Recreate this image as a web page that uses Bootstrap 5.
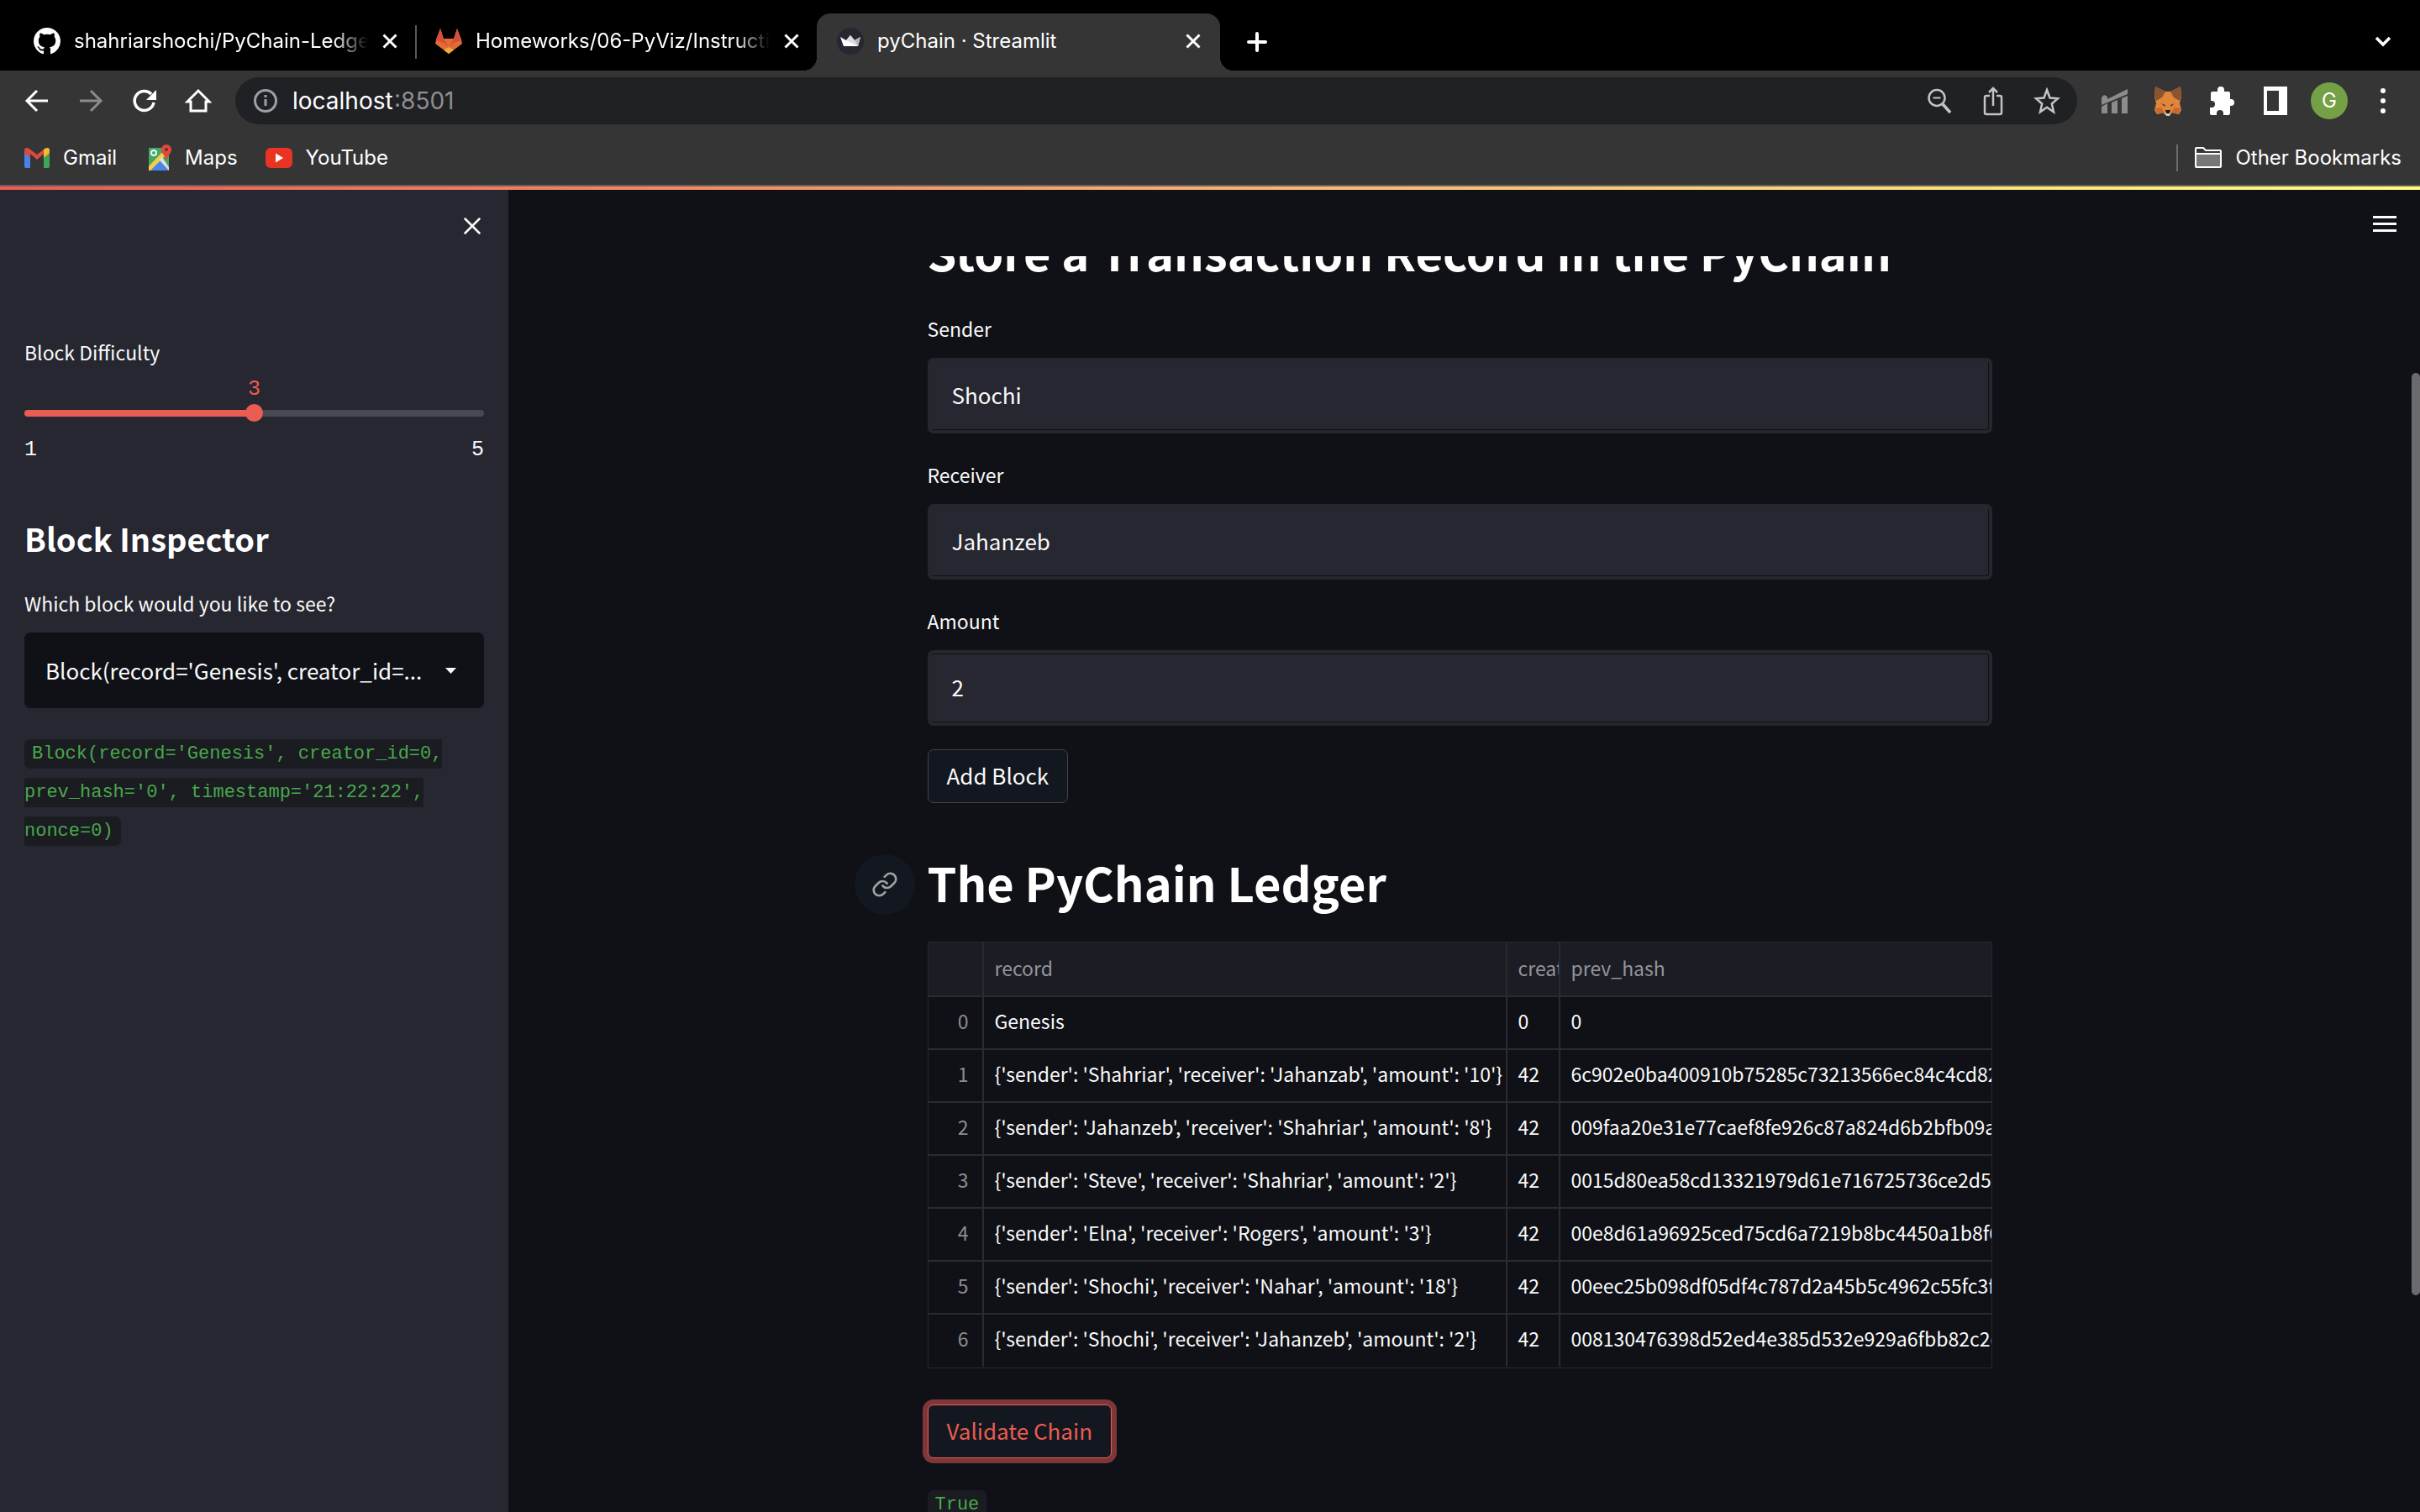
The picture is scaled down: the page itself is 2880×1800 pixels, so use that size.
<!DOCTYPE html>
<html lang="en" data-bs-theme="dark">
<head>
<meta charset="utf-8">
<meta name="viewport" content="width=device-width, initial-scale=1">
<title>pyChain · Streamlit</title>
<link rel="stylesheet" href="https://cdn.jsdelivr.net/npm/bootstrap@5.3.0/dist/css/bootstrap.min.css">
<style>
:root{--ink:#fafafa;--page:#0f1116;--panel:#262730;--accent:#eb5c53;--chrome:#353535;--ui:Inter,"Liberation Sans",sans-serif;--text:"Noto Sans CJK SC","Noto Sans",sans-serif;--code:"Liberation Mono",monospace}
body{background:var(--page);color:var(--ink);font-family:var(--text);font-size:23px;line-height:36px}
svg{display:block;flex:none}
.plain{background:none;border:0;padding:0;color:inherit}
/* browser frame */
.browser{font-family:var(--ui);font-size:24px;line-height:32px;color:#fff}
.tabstrip{background:#000;height:84px;padding:16px 34px 0 40px}
.tab-item{width:434px;margin-right:20px;padding-bottom:2px}
.tab-item .name{overflow:hidden;white-space:nowrap;-webkit-mask-image:linear-gradient(to right,#000 88%,transparent)}
.tab-rule{width:2px;height:40px;background:#5a5a5a;margin-right:22px}
.tab-live{width:480px;background:var(--chrome);border-radius:16px 16px 0 0;position:relative;padding:0 22px 2px 24px;margin-right:32px}
.tab-live::before,.tab-live::after{content:"";position:absolute;bottom:0;width:16px;height:16px}
.tab-live::before{left:-16px;background:radial-gradient(circle at 0 0,transparent 16px,var(--chrome) 16px)}
.tab-live::after{right:-16px;background:radial-gradient(circle at 100% 0,transparent 16px,var(--chrome) 16px)}
.toolbar{background:var(--chrome);height:72px;padding:0 28px}
.icon-row{display:flex;align-items:center;gap:32px}
.omni{background:#202124;border-radius:28px;height:56px;padding:0 20px}
.omni input{background:none;border:0;color:#fff;font-size:28px;width:121px;padding:0;outline:0}
.port{font-size:28px;color:#8f8f8f}
.avatar{width:44px;height:44px;margin:0 -6px;border-radius:50%;background:#74a046;font-size:24px}
.bookmarks{background:var(--chrome);height:66px;padding:0 22px 0 29px;border-bottom:2px solid #616161}
.bookmarks a{color:#fff;text-decoration:none;margin-right:33px}
.bookmarks a:last-child{margin-right:0}
.rainbow{height:4px;background:linear-gradient(to right,#ee5a52,#f9b873 55%,#fffd80)}
/* sidebar */
.side{width:605px;background:var(--panel);padding:0 29px}
.side-head{height:175px;padding:33px 4px 0 0}
.tick{font-family:var(--code);font-size:25px;line-height:30px;padding-top:8px}
.tick-now{color:var(--accent)}
.slide{appearance:none;width:100%;height:22px;background:none;display:block;margin:2px 0 10px}
.slide::-webkit-slider-runnable-track{height:8px;border-radius:4px;background:linear-gradient(to right,var(--accent) 50%,#484953 50%)}
.slide::-webkit-slider-thumb{appearance:none;width:21px;height:21px;border-radius:50%;background:var(--accent);margin-top:-7px}
.side h2{font-size:38px;line-height:52px;font-weight:700;margin:64px 0 33px}
.picker{appearance:none;width:100%;height:90px;border:0;border-radius:7px;background:var(--page);color:var(--ink);font-size:26px;padding:0 70px 0 25px}
.pick-arrow{position:absolute;right:33px;top:42px;pointer-events:none}
.chip{font-family:var(--code);font-size:22px;line-height:46px;color:#49a84a;background:#1a1c22;border-radius:7px;padding:5px 9px;word-wrap:normal}
/* main */
.main-head{height:79px;padding:31px 28px 0}
.column{width:1267px;margin-top:-45px}
.column h1{font-size:56px;line-height:78px;font-weight:700;margin:0}
.column form{margin:35px 0 55px}
.fieldrow{margin-bottom:31px}
.fieldrow label,.side label{display:block;margin-bottom:17px;line-height:36px}
.fieldrow input{display:block;width:100%;height:90px;border:4px solid #25272d;border-radius:7px;background:var(--panel);box-shadow:inset -1px -1px 0 var(--page);color:var(--ink);font-size:26px;padding:0 25px 3px;outline:0}
.fieldrow:last-of-type input{box-shadow:inset -1px -1px 0 var(--page),inset 0 1px 0 var(--page)}
.act{height:64px;padding:0 22px 2px;border:1px solid #41444c;border-radius:7px;background:#131720;color:var(--ink);font-size:26px;line-height:36px}
.act-on{border-color:var(--accent);color:var(--accent);box-shadow:0 0 0 6px #7f3639}
.anchor{position:absolute;left:-87px;top:6px;width:72px;height:72px;border-radius:50%;background:#131720}
.ledger{border:1px solid #26282e;margin:32px 0 43px;overflow:hidden}
.ledger table{table-layout:fixed;width:100%;border-collapse:separate;border-spacing:0}
.ledger th,.ledger td{height:63px;padding:0 13px 5px;border-right:2px solid #292b31;border-bottom:2px solid #292b31;overflow:hidden;white-space:nowrap;font-weight:400}
.ledger thead th{height:65px;padding-bottom:3px;background:#1b1c24;color:#94959a}
.ledger tbody th{color:#8c8d91;text-align:right;padding-right:16px}
.ledger tr>:last-child{border-right:0}
.ledger tbody tr:last-child>*{border-bottom-color:transparent}
.result{margin:33px 0 0}
.scroller{position:absolute;right:0;top:218px;width:10px;height:1098px;border-radius:5px;background:#6b6b6f}
</style>
<script src="https://cdn.jsdelivr.net/npm/bootstrap@5.3.0/dist/js/bootstrap.bundle.min.js"></script>
</head>
<body>
<div class="vh-100 d-flex flex-column overflow-hidden">
<header class="browser flex-shrink-0">
  <div class="tabstrip d-flex">
    <div class="tab-item d-flex align-items-center">
      <svg width="32" height="32" viewBox="0 0 16 16" fill="#fff"><path d="M8 0C3.58 0 0 3.58 0 8c0 3.54 2.29 6.53 5.47 7.59.4.07.55-.17.55-.38 0-.19-.01-.82-.01-1.49-2.01.37-2.53-.49-2.69-.94-.09-.23-.48-.94-.82-1.13-.28-.15-.68-.52-.01-.53.63-.01 1.08.58 1.23.82.72 1.21 1.87.87 2.33.66.07-.52.28-.87.51-1.07-1.78-.2-3.64-.89-3.64-3.95 0-.87.31-1.59.82-2.15-.08-.2-.36-1.02.08-2.12 0 0 .67-.21 2.2.82.64-.18 1.32-.27 2-.27s1.36.09 2 .27c1.53-1.04 2.2-.82 2.2-.82.44 1.1.16 1.92.08 2.12.51.56.82 1.27.82 2.15 0 3.07-1.87 3.75-3.65 3.95.29.25.54.73.54 1.48 0 1.07-.01 1.93-.01 2.2 0 .21.15.46.55.38A8.01 8.01 0 0 0 16 8c0-4.42-3.58-8-8-8z"/></svg>
      <span class="name flex-fill ms-3">shahriarshochi/PyChain-Ledger</span>
      <button class="plain ms-3" aria-label="Close tab"><svg width="20" height="20" viewBox="0 0 20 20" stroke="#fff" stroke-width="3"><path d="M2.500 2.500l15 15M17.500 2.500l-15 15"/></svg></button>
    </div>
    <div class="tab-rule align-self-center"></div>
    <div class="tab-item d-flex align-items-center">
      <svg width="32" height="32" viewBox="0 0 32 32"><path d="M6 1 1.200 14 0 19l16 12 16-12-1.200-5L26 1l-4 12H10z" fill="#e56b34"/><path d="M6 1l4 12 6 10 6-10 4-12 5.500 14L22 18l-6 5-6-5L.5 15z" fill="#d5503a"/><path d="M16 23l-6 3.500L16 31l6-4.500z" fill="#f0a83f"/></svg>
      <span class="name flex-fill ms-3">Homeworks/06-PyViz/Instructions</span>
      <button class="plain ms-3" aria-label="Close tab"><svg width="20" height="20" viewBox="0 0 20 20" stroke="#fff" stroke-width="3"><path d="M2.500 2.500l15 15M17.500 2.500l-15 15"/></svg></button>
    </div>
    <div class="tab-live d-flex align-items-center">
      <svg width="32" height="32" viewBox="0 0 32 32"><circle cx="16" cy="16" r="16" fill="#262730"/><path d="M4 11l7 4 5-6 5 6 7-4-3 11H8z" fill="#fff"/><path d="M16 9l5 6 7-4-3 11z" fill="#b5b5b8"/><path d="M16 9l-5 6 14 7-4-7z" fill="#ddd"/></svg>
      <span class="flex-fill ms-3">pyChain · Streamlit</span>
      <button class="plain" aria-label="Close tab"><svg width="20" height="20" viewBox="0 0 20 20" stroke="#fff" stroke-width="3"><path d="M2.500 2.500l15 15M17.500 2.500l-15 15"/></svg></button>
    </div>
    <button class="plain" aria-label="New tab"><svg width="24" height="24" viewBox="0 0 24 24" stroke="#fff" stroke-width="4" stroke-linecap="round"><path d="M12 2v20M2 12h20"/></svg></button>
    <button class="plain ms-auto" aria-label="Search tabs"><svg width="20" height="14" viewBox="0 0 20 14" fill="none" stroke="#fff" stroke-width="3.500"><path d="M2 2l8 8 8-8"/></svg></button>
  </div>

  <div class="toolbar d-flex align-items-center">
    <div class="icon-row flex-shrink-0 me-4">
      <button class="plain" aria-label="Back"><svg width="32" height="32" viewBox="0 0 32 32" fill="none" stroke="#fff" stroke-width="3"><path d="M29 16H5M16 4L4 16l12 12"/></svg></button>
      <button class="plain" aria-label="Forward"><svg width="32" height="32" viewBox="0 0 32 32" fill="none" stroke="#8b8b8b" stroke-width="3"><path d="M3 16h24M16 4l12 12-12 12"/></svg></button>
      <button class="plain" aria-label="Reload"><svg width="32" height="32" viewBox="0 0 32 32" fill="none" stroke="#fff" stroke-width="3.500"><path d="M27 18A11.500 11.500 0 1 1 24 8"/><path d="M30 3v12H18z" fill="#fff" stroke="none"/></svg></button>
      <button class="plain" aria-label="Home"><svg width="32" height="32" viewBox="0 0 32 32" fill="none" stroke="#fff" stroke-width="3"><path d="M3 17L16 4l13 13h-4v11H7V17z"/></svg></button>
    </div>
    <div class="omni flex-fill d-flex align-items-center ms-1">
      <svg width="32" height="32" viewBox="0 0 32 32" fill="none" stroke="#9aa0a6" stroke-width="3"><circle cx="16" cy="16" r="12.500"/><path d="M16 14v8M16 9v3"/></svg>
      <input class="ms-3" type="text" value="localhost" aria-label="Address"><span class="port flex-fill">:8501</span>
      <div class="icon-row">
        <button class="plain" aria-label="Zoom"><svg width="32" height="32" viewBox="0 0 32 32" fill="none" stroke="#c4c4c4" stroke-width="2.500"><circle cx="13" cy="12.500" r="9.500"/><path d="M20 20l9 10" stroke-width="3.500"/><path d="M8.500 12.500h9" stroke-width="2"/></svg></button>
        <button class="plain" aria-label="Share"><svg width="32" height="36" viewBox="0 0 32 36" fill="none" stroke="#c4c4c4" stroke-width="2.500"><path d="M12 12H8q-2 0-2 2v18q0 2 2 2h16q2 0 2-2V14q0-2-2-2h-4M16 24V2M11 8l5-5 5 5"/></svg></button>
        <button class="plain" aria-label="Bookmark"><svg width="32" height="32" viewBox="0 0 32 32" fill="none" stroke="#c4c4c4" stroke-width="2.500"><path d="M16 3l3.500 9.500 9.500.8-7.200 6.200 2.200 9.800-8-5.500-8 5.500 2.200-9.800L3 13.300l9.500-.8z"/></svg></button>
      </div>
    </div>
    <div class="icon-row flex-shrink-0 ms-4 ps-1">
      <svg width="32" height="32" viewBox="0 0 32 32" fill="#8c8c8c"><path d="M1 12l3-3 4 2v3L32 2v6L1 21zM1 23l7-4v12H1zM13 18l7-3v16h-7zM25 13l7-3v21h-7z"/></svg>
      <svg width="32" height="36" viewBox="0 0 32 36"><path d="M1 1l12 6h6l12-6 1 12-2 8 2 8-3 5-8-2-3 3h-5l-3-3-7 2-3-5 2-8-2-8z" fill="#e2843a"/><path d="M1 1l12 6-4 7-7 4-2-6zM31 1L19 7l4 7 7 4 2-6z" fill="#8a5432"/><path d="M1 27l7-1 4 6-8 2zM31 27l-7-1-4 6 8 2z" fill="#c96a2c"/><path d="M12 31h8l-2 5h-4z" fill="#d8c8ba"/><path d="M13 29h6l-1 4h-4z" fill="#1c1c1c"/><path d="M8 21l5 2-1 2zM24 21l-5 2 1 2z" fill="#4f3a37"/></svg>
      <svg width="32" height="36" viewBox="0 0 32 36" fill="#fff"><path d="M3 9q0-2 2-2h6V5a4 4 0 0 1 8 0v2h5q2 0 2 2v7h1a4 4 0 0 1 0 8h-1v8q0 3-2 3h-6v-2a4 4 0 0 0-8 0v2H4q-2 0-2-2v-7h2a4 4 0 0 0 0-8H3z"/></svg>
      <svg width="32" height="34" viewBox="0 0 32 34"><path d="M2 0h28v34H2zM6 5v24h14V5z" fill="#fff" fill-rule="evenodd"/></svg>
      <button class="plain avatar" aria-label="Profile">G</button>
      <button class="plain" aria-label="Menu"><svg width="32" height="32" viewBox="0 0 32 32" fill="#fff"><circle cx="16" cy="4" r="3"/><circle cx="16" cy="16" r="3"/><circle cx="16" cy="28" r="3"/></svg></button>
    </div>
  </div>

  <nav class="bookmarks d-flex align-items-center">
    <a href="#" class="d-flex align-items-center pe-1"><svg class="me-3" width="30" height="24" viewBox="0 0 30 24"><path d="M0 5v17q0 2 2 2h5V11z" fill="#4a80ec"/><path d="M30 5v17q0 2-2 2h-5V11z" fill="#3fa455"/><path d="M0 6V3q0-3 3-3 2 0 4 2l8 6 8-6q2-2 4-2 3 0 3 3v3l-7 6V7l-8 7-8-7v5z" fill="#dc4a3d"/><path d="M23 2q2-2 4-2 3 0 3 3v3l-7 6z" fill="#f2bb2d"/></svg>Gmail</a>
    <a href="#" class="d-flex align-items-center"><svg class="me-3" width="28" height="32" viewBox="0 0 28 32"><path d="M1 4h24v27H1z" fill="#49a462"/><path d="M1 31L14 16l11 15z" fill="#4b84ea"/><path d="M1 26L21 5l4 4L3 31H1z" fill="#f3ce47"/><path d="M13 18l4-3 8 12v4z" fill="#dedede"/><circle cx="7" cy="10" r="3" fill="none" stroke="#dff" stroke-width="2"/><path d="M22 0a6 6 0 0 1 6 6c0 5-4 6-6 13-2-7-6-8-6-13a6 6 0 0 1 6-6z" fill="#da4b3d"/><circle cx="22" cy="6" r="2" fill="#7f251f"/></svg>Maps</a>
    <a href="#" class="d-flex align-items-center"><svg class="me-3" width="32" height="24" viewBox="0 0 32 24"><rect width="32" height="24" rx="6" fill="#e93323"/><path d="M12 6.500v11l9-5.500z" fill="#fff"/></svg>YouTube</a>
    <a href="#" class="d-flex align-items-center ms-auto"><svg class="me-3" width="54" height="32" viewBox="0 0 54 32" fill="none" stroke="#fff" stroke-width="2"><path d="M1 0v32" stroke="#6c6c6c"/><path d="M23 11h30v15H23z" fill="#777" stroke="none"/><path d="M23 5q0-1 1-1h8l3 3h17q1 0 1 1v18q0 1-1 1H24q-1 0-1-1zM23 11h30"/></svg>Other Bookmarks</a>
  </nav>
  <div class="rainbow"></div>
</header>

<div class="d-flex flex-fill overflow-hidden position-relative">
  <aside class="side flex-shrink-0">
    <div class="side-head d-flex justify-content-end align-items-start">
      <button class="plain" aria-label="Close sidebar"><svg width="20" height="20" viewBox="0 0 20 20" stroke="#fafafa" stroke-width="2.500" stroke-linecap="round"><path d="M1.500 1.500l17 17M18.500 1.500l-17 17"/></svg></button>
    </div>
    <label class="mb-1" for="difficulty">Block Difficulty</label>
    <output class="tick tick-now d-block text-center" for="difficulty">3</output>
    <input class="slide" id="difficulty" type="range" min="1" max="5" value="3">
    <div class="tick d-flex justify-content-between"><span>1</span><span>5</span></div>
    <h2>Block Inspector</h2>
    <label for="block">Which block would you like to see?</label>
    <div class="position-relative mb-4 pb-2">
      <select class="picker" id="block"><option>Block(record='Genesis', creator_id=...</option></select>
      <svg class="pick-arrow" width="13" height="7" viewBox="0 0 13 7"><path d="M0 0h13L6.500 7z" fill="#fafafa"/></svg>
    </div>
    <p class="m-0"><code class="chip">Block(record='Genesis', creator_id=0, prev_hash='0', timestamp='21:22:22', nonce=0)</code></p>
  </aside>

  <main class="flex-fill d-flex flex-column overflow-hidden">
    <div class="main-head flex-shrink-0 d-flex justify-content-end align-items-start">
      <button class="plain" aria-label="Main menu"><svg width="28" height="20" viewBox="0 0 28 20" fill="#fafafa"><path d="M0 0h28v3H0zM0 8h28v3H0zM0 16h28v3H0z"/></svg></button>
    </div>
    <div class="flex-fill overflow-hidden d-flex justify-content-center" style="padding-right:11px">
      <div class="column">
        <h1>Store a Transaction Record in the PyChain</h1>
        <form>
          <div class="fieldrow"><label for="sender">Sender</label><input id="sender" type="text" value="Shochi"></div>
          <div class="fieldrow"><label for="receiver">Receiver</label><input id="receiver" type="text" value="Jahanzeb"></div>
          <div class="fieldrow mb-4 pb-1"><label for="amount">Amount</label><input id="amount" type="text" value="2"></div>
          <button type="button" class="act">Add Block</button>
        </form>
        <div class="position-relative">
          <a class="anchor d-flex align-items-center justify-content-center" href="#ledger" aria-label="Link to this heading"><svg width="32" height="32" viewBox="0 0 24 24" fill="none" stroke="#a0a1a4" stroke-width="2" stroke-linecap="round"><path d="M10 13a5 5 0 0 0 7.540.54l3-3a5 5 0 0 0-7.070-7.070l-1.720 1.710"/><path d="M14 11a5 5 0 0 0-7.540-.54l-3 3a5 5 0 0 0 7.070 7.070l1.710-1.710"/></svg></a>
          <h1 id="ledger">The PyChain Ledger</h1>
        </div>
        <div class="ledger">
          <table>
            <colgroup><col style="width:66px"><col style="width:623px"><col style="width:63px"><col></colgroup>
            <thead><tr><th></th><th>record</th><th>creator_id</th><th>prev_hash</th></tr></thead>
            <tbody>
              <tr><th>0</th><td>Genesis</td><td>0</td><td>0</td></tr>
              <tr><th>1</th><td>{'sender': 'Shahriar', 'receiver': 'Jahanzab', 'amount': '10'}</td><td>42</td><td>6c902e0ba400910b75285c73213566ec84c4cd82</td></tr>
              <tr><th>2</th><td>{'sender': 'Jahanzeb', 'receiver': 'Shahriar', 'amount': '8'}</td><td>42</td><td>009faa20e31e77caef8fe926c87a824d6b2bfb09a6</td></tr>
              <tr><th>3</th><td>{'sender': 'Steve', 'receiver': 'Shahriar', 'amount': '2'}</td><td>42</td><td>0015d80ea58cd13321979d61e716725736ce2d5b</td></tr>
              <tr><th>4</th><td>{'sender': 'Elna', 'receiver': 'Rogers', 'amount': '3'}</td><td>42</td><td>00e8d61a96925ced75cd6a7219b8bc4450a1b8f6</td></tr>
              <tr><th>5</th><td>{'sender': 'Shochi', 'receiver': 'Nahar', 'amount': '18'}</td><td>42</td><td>00eec25b098df05df4c787d2a45b5c4962c55fc3fd</td></tr>
              <tr><th>6</th><td>{'sender': 'Shochi', 'receiver': 'Jahanzeb', 'amount': '2'}</td><td>42</td><td>008130476398d52ed4e385d532e929a6fbb82c2c</td></tr>
            </tbody>
          </table>
        </div>
        <button type="button" class="act act-on">Validate Chain</button>
        <p class="result"><code class="chip">True</code></p>
      </div>
    </div>
  </main>
  <div class="scroller"></div>
</div>
</div>
</body>
</html>
